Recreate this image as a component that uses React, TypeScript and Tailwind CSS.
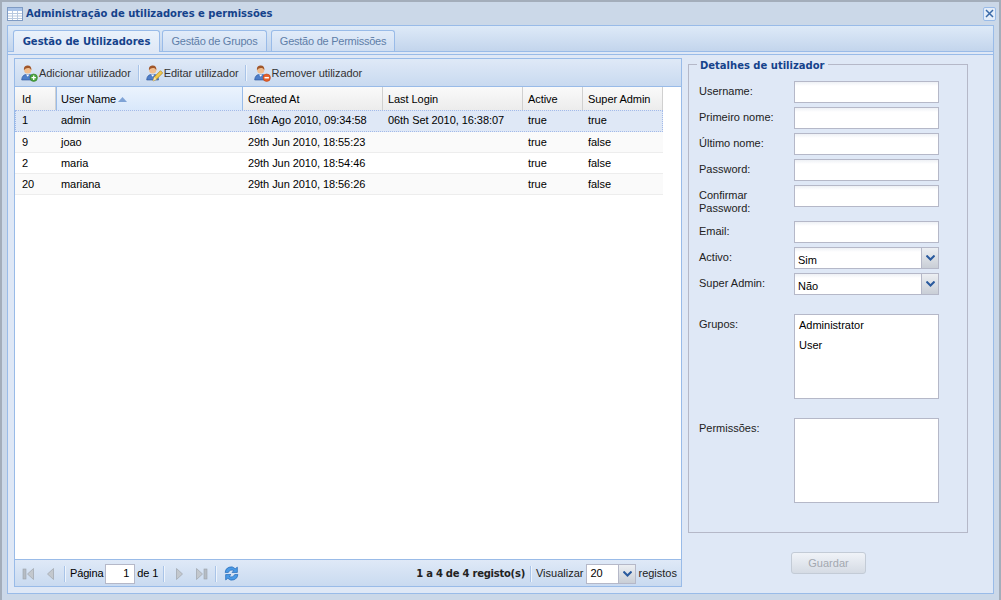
import type { ReactNode } from 'react';

const columns = [
  { label: 'Id', width: 'w-[41px]' },
  { label: 'User Name', width: 'w-[187px]' },
  { label: 'Created At', width: 'w-[140px]' },
  { label: 'Last Login', width: 'w-[140px]' },
  { label: 'Active', width: 'w-[60px]' },
  { label: 'Super Admin', width: 'w-[80px]' },
];

const rows = [
  ['1', 'admin', '16th Ago 2010, 09:34:58', '06th Set 2010, 16:38:07', 'true', 'true'],
  ['9', 'joao', '29th Jun 2010, 18:55:23', '', 'true', 'false'],
  ['2', 'maria', '29th Jun 2010, 18:54:46', '', 'true', 'false'],
  ['20', 'mariana', '29th Jun 2010, 18:56:26', '', 'true', 'false'],
];

const UserIcon = ({ badge }: { badge: 'add' | 'edit' | 'remove' }) => (
  <svg width="17" height="17" viewBox="0 0 17 17" className="shrink-0">
    <path d="M.7 15c0-3.500 2-5.500 4.800-5.500h2.500c2.800 0 4.500 2 4.500 5.500z" fill="#4f7fc9" stroke="#2a5298" strokeWidth="0.6" />
    <path d="M5 9.500l1.700 2.300 1.700-2.300z" fill="#fff" />
    <circle cx="6.700" cy="5" r="3.600" fill="#f0bd8e" />
    <path d="M3 5.200C2.400 1.500 4.800.5 6.800.5c2.500 0 3.900 1.800 3.500 4.700-.7-1.600-1.800-2.200-3.400-2.200-1.500 0-2.800.7-3.900 2.200z" fill="#a0562a" />
    {badge === 'add' && (
      <>
        <circle cx="12.700" cy="12.700" r="3.700" fill="#4ea83f" stroke="#2f7a28" strokeWidth="0.6" />
        <path d="M12.700 10.500v4.400M10.500 12.700h4.400" stroke="#fff" strokeWidth="1.300" />
      </>
    )}
    {badge === 'remove' && (
      <>
        <circle cx="12.700" cy="12.700" r="3.700" fill="#e8622a" stroke="#b8431a" strokeWidth="0.6" />
        <path d="M10.500 12.700h4.400" stroke="#fff" strokeWidth="1.500" />
      </>
    )}
    {badge === 'edit' && (
      <>
        <path d="M7 16l1.200-4L14.500 5.700l2.200 2.200L10.500 14.200z" fill="#f2c94c" stroke="#a87f1c" strokeWidth="0.7" />
        <path d="M7 16l1.200-4 2.300 2.200z" fill="#f6e3b0" />
      </>
    )}
  </svg>
);

const Sep = ({ className = 'mx-[3px]' }: { className?: string }) => (
  <div className={`w-[2px] h-[16px] border-l border-[#a9c4e8] bg-[#eef4fc] shrink-0 ${className}`} />
);

const ToolButton = ({ badge, children }: { badge: 'add' | 'edit' | 'remove'; children: ReactNode }) => (
  <div className="flex items-center gap-[1px] text-[#333]">
    <UserIcon badge={badge} />
    <span className="whitespace-nowrap tracking-[-0.06px]">{children}</span>
  </div>
);

const PageArrow = ({ dir, bar = false }: { dir: 'left' | 'right'; bar?: boolean }) => (
  <svg width="14" height="14" viewBox="0 0 14 14" className="shrink-0">
    {dir === 'left' ? (
      <>
        {bar && <rect x="1" y="2" width="3" height="10" fill="#b6bcc4" stroke="#9aa1aa" strokeWidth="0.6" />}
        <path d={bar ? 'M11.500 1.500v11L5.500 7z' : 'M9.500 1.500v11L3.500 7z'} fill="#c3c8ce" stroke="#a5abb3" strokeWidth="0.8" />
      </>
    ) : (
      <>
        {bar && <rect x="10" y="2" width="3" height="10" fill="#b6bcc4" stroke="#9aa1aa" strokeWidth="0.6" />}
        <path d={bar ? 'M2.500 1.500v11L8.500 7z' : 'M4.500 1.500v11L10.500 7z'} fill="#c3c8ce" stroke="#a5abb3" strokeWidth="0.8" />
      </>
    )}
  </svg>
);

const Chevron = () => (
  <svg width="9" height="6" viewBox="0 0 9 6">
    <path d="M.5.500L4.500 4.500 8.500.500" fill="none" stroke="#2a5a9e" strokeWidth="2" />
  </svg>
);

const TextField = () => (
  <div className="w-[145px] h-[22px] shrink-0 border border-[#b5b8c8] bg-white bg-gradient-to-b from-[#eef1f5] to-white to-[20%]" />
);

const Combo = ({ value }: { value: string }) => (
  <div className="w-[145px] h-[22px] shrink-0 border border-[#b5b8c8] bg-white flex">
    <div className="flex-1 pl-[3px] pt-[5px] text-black leading-[14px] bg-gradient-to-b from-[#eef1f5] to-white to-[20%]">{value}</div>
    <div className="w-[17px] flex items-center justify-center border-l border-[#b5b8c8] bg-gradient-to-b from-[#eceff3] to-[#c9ced6]">
      <Chevron />
    </div>
  </div>
);

const FormRow = ({ label, children, className = '' }: { label: ReactNode; children: ReactNode; className?: string }) => (
  <div className={`flex ${className}`}>
    <div className="w-[95px] shrink-0 pt-[4px] leading-[13px] text-[#222]">{label}</div>
    {children}
  </div>
);

export default function App() {
  return (
    <div className="w-[1001px] h-[600px] overflow-hidden flex flex-col bg-[#cbd8e8] border-t-2 border-l-2 border-r-2 border-[#a3adba] text-[11px] text-black font-['Liberation_Sans',Arial,sans-serif]">
      {/* titulo */}
      <div className="h-[23px] shrink-0 flex items-center pl-[5px] pr-[2px]">
        <svg width="16" height="14" viewBox="0 0 16 14" className="shrink-0">
          <rect x="0.500" y="0.500" width="15" height="13" fill="#fff" stroke="#7f9bc4" />
          <rect x="1" y="1" width="14" height="3" fill="#a9c3e8" />
          <path d="M1 6.500h14M1 9h14M1 11.500h14M5.500 4v9M10.500 4v9" stroke="#b9c9df" />
        </svg>
        <span className="ml-[3px] font-['DejaVu_Sans',sans-serif] font-bold text-[10px] text-[#15428b] whitespace-nowrap">
          Administração de utilizadores e permissões
        </span>
        <div className="ml-auto mr-[1px] w-[13px] h-[14px] rounded-[2px] border border-[#99bbe8] bg-[#e4edf9] flex items-center justify-center">
          <svg width="9" height="9" viewBox="0 0 9 9">
            <path d="M1 1l7 7M8 1L1 8" stroke="#3a6aa8" strokeWidth="1.500" />
          </svg>
        </div>
      </div>

      {/* corpo */}
      <div className="flex-1 mx-[5px] mb-[6px] border border-[#99bbe8] bg-[#dfe8f6] flex flex-col min-h-0">
        {/* tabs */}
        <div className="h-[26px] shrink-0 relative flex items-end pl-[5px] gap-[2px] bg-gradient-to-b from-[#deeaf8] to-[#c3d5ec] border-b border-[#99bbe8]">
          <div className="w-[147px] h-[22px] -mb-px rounded-t-[3px] border border-b-0 border-[#99bbe8] bg-gradient-to-b from-[#eaf2fb] to-[#dfe8f6] font-['DejaVu_Sans',sans-serif] font-bold text-[10px] text-[#15428b] flex items-center justify-center">
            Gestão de Utilizadores
          </div>
          <div className="w-[105px] h-[21px] rounded-t-[3px] border border-b-0 border-[#99bbe8] bg-gradient-to-b from-[#e2ecf9] to-[#cfdef2] text-[#5f7ea8] tracking-[-0.25px] flex items-center justify-center">
            Gestão de Grupos
          </div>
          <div className="ml-[2px] w-[124px] h-[21px] rounded-t-[3px] border border-b-0 border-[#99bbe8] bg-gradient-to-b from-[#e2ecf9] to-[#cfdef2] text-[#5f7ea8] tracking-[-0.25px] flex items-center justify-center">
            Gestão de Permissões
          </div>
        </div>
        <div className="h-[2px] shrink-0 border-b border-[#99bbe8] box-content" />

        <div className="flex-1 flex min-h-0 pl-[6px] pt-[3px]">
          {/* grelha */}
          <div className="w-[668px] h-[529px] shrink-0 border border-[#99bbe8] bg-white flex flex-col">
            <div className="h-[28px] shrink-0 flex items-center pl-[6px] pt-[1px] bg-gradient-to-b from-[#dfe9f7] to-[#c9daf0] border-b border-[#99bbe8]">
              <ToolButton badge="add">Adicionar utilizador</ToolButton>
              <Sep className="ml-[7px] mr-[6px]" />
              <ToolButton badge="edit">Editar utilizador</ToolButton>
              <Sep className="ml-[6px] mr-[7px]" />
              <ToolButton badge="remove">Remover utilizador</ToolButton>
            </div>

            <div className="h-[23px] shrink-0 flex">
              {columns.map((c, i) => (
                <div
                  key={c.label}
                  className={`${c.width} shrink-0 pt-[2px] flex items-center gap-[2px] border-r tracking-[-0.06px] ${
                    i === 0 ? 'pl-[7px]' : i === 1 ? 'pl-[4px]' : 'pl-[5px]'
                  } ${
                    i === 1
                      ? 'border-l border-[#99bbe8] bg-gradient-to-b from-[#ebf3fd] to-[#d9e8fb]'
                      : 'border-[#d0d0d0] bg-gradient-to-b from-[#fafafa] to-[#ececec]'
                  }`}
                >
                  {c.label}
                  {i === 1 && (
                    <svg width="9" height="5" viewBox="0 0 9 5">
                      <path d="M0 5L4.500 0 9 5z" fill="#7fa3d6" />
                    </svg>
                  )}
                </div>
              ))}
            </div>

            {rows.map((r, i) => (
              <div
                key={r[0]}
                className={`w-[648px] shrink-0 flex items-center ${
                  i === 0
                    ? 'h-[22px] pb-[1px] bg-[#dfe8f6] outline outline-1 outline-dotted -outline-offset-1 outline-[#a3bae9]'
                    : i === 2
                      ? 'h-[21px] border-b bg-white border-[#ededed]'
                      : 'h-[21px] border-b bg-[#fafafa] border-[#ededed]'
                }`}
              >
                {r.map((cell, j) => (
                  <div
                    key={j}
                    className={`${columns[j].width} shrink-0 whitespace-nowrap tracking-[-0.06px] ${j === 0 ? 'pl-[7px]' : 'pl-[5px]'}`}
                  >
                    {cell}
                  </div>
                ))}
              </div>
            ))}

            <div className="flex-1" />

            <div className="h-[27px] shrink-0 flex items-center pl-[7px] pr-[4px] pt-[1px] border-t border-[#99bbe8] bg-gradient-to-b from-[#dfe9f7] to-[#c9daf0]">
              <PageArrow dir="left" bar />
              <div className="w-[8px]" />
              <PageArrow dir="left" />
              <Sep className="ml-[6px] mr-[4px]" />
              <span className="tracking-[-0.15px]">Página</span>
              <div className="w-[30px] h-[20px] mx-[2px] pr-[5px] border border-[#b5b8c8] bg-white flex items-center justify-end">1</div>
              <span className="tracking-[-0.15px]">de 1</span>
              <Sep className="ml-[5px] mr-[7px]" />
              <PageArrow dir="right" />
              <div className="w-[8px]" />
              <PageArrow dir="right" bar />
              <Sep className="ml-[7px] mr-[6px]" />
              <svg width="17" height="17" viewBox="0 0 16 16" className="shrink-0">
                <path d="M2 7a5.500 5.500 0 0 1 9.500-3.500L13.500 2v5h-5l1.700-1.700A3.500 3.500 0 0 0 5 7z" fill="#4a9ae6" stroke="#2a6cb8" strokeWidth="0.7" />
                <path d="M14 9a5.500 5.500 0 0 1-9.500 3.500L2.500 14V9h5l-1.700 1.700A3.500 3.500 0 0 0 11 9z" fill="#4a9ae6" stroke="#2a6cb8" strokeWidth="0.7" />
              </svg>
              <b className="ml-auto text-[#222] font-['DejaVu_Sans',sans-serif] text-[10px] tracking-[-0.25px]">1 a 4 de 4 registo(s)</b>
              <Sep className="ml-[5px] mr-[4px]" />
              <span className="text-[#222]">Visualizar</span>
              <div className="w-[50px] h-[20px] ml-[3px] mr-[2px] border border-[#b5b8c8] bg-white flex">
                <div className="flex-1 pl-[3px] flex items-center">20</div>
                <div className="w-[17px] flex items-center justify-center border-l border-[#b5b8c8] bg-gradient-to-b from-[#eceff3] to-[#c9ced6]">
                  <Chevron />
                </div>
              </div>
              <span className="text-[#222]">registos</span>
            </div>
          </div>

          {/* detalhes */}
          <div className="ml-[6px] w-[280px] flex flex-col">
            <fieldset className="h-[475px] border border-[#b5b8c8] pl-[10px] pr-[28px] pt-[10px]">
              <legend className="ml-[-2px] px-[3px] translate-y-[1px] font-['DejaVu_Sans',sans-serif] font-bold text-[10px] leading-[13px] text-[#15428b]">
                Detalhes de utilizador
              </legend>
              <div className="flex flex-col gap-[4px]">
                <FormRow label="Username:"><TextField /></FormRow>
                <FormRow label="Primeiro nome:"><TextField /></FormRow>
                <FormRow label="Último nome:"><TextField /></FormRow>
                <FormRow label="Password:"><TextField /></FormRow>
                <FormRow label={<>Confirmar<br />Password:</>} className="h-[32px]"><TextField /></FormRow>
                <FormRow label="Email:"><TextField /></FormRow>
                <FormRow label="Activo:"><Combo value="Sim" /></FormRow>
                <FormRow label="Super Admin:"><Combo value="Não" /></FormRow>
                <FormRow label="Grupos:" className="mt-[15px]">
                  <div className="w-[145px] h-[85px] border border-[#b5b8c8] bg-white pl-[4px] leading-[20px]">
                    <div>Administrator</div>
                    <div>User</div>
                  </div>
                </FormRow>
                <FormRow label="Permissões:" className="mt-[15px]">
                  <div className="w-[145px] h-[85px] border border-[#b5b8c8] bg-white" />
                </FormRow>
              </div>
            </fieldset>
            <div className="mt-[19px] ml-[103px] w-[75px] h-[22px] rounded-[3px] border border-[#c3cbd6] bg-gradient-to-b from-[#f0f3f8] to-[#d5dbe4] text-[#a3a8b0] flex items-center justify-center">
              Guardar
            </div>
          </div>
        </div>
      </div>
    </div>
  );
}
